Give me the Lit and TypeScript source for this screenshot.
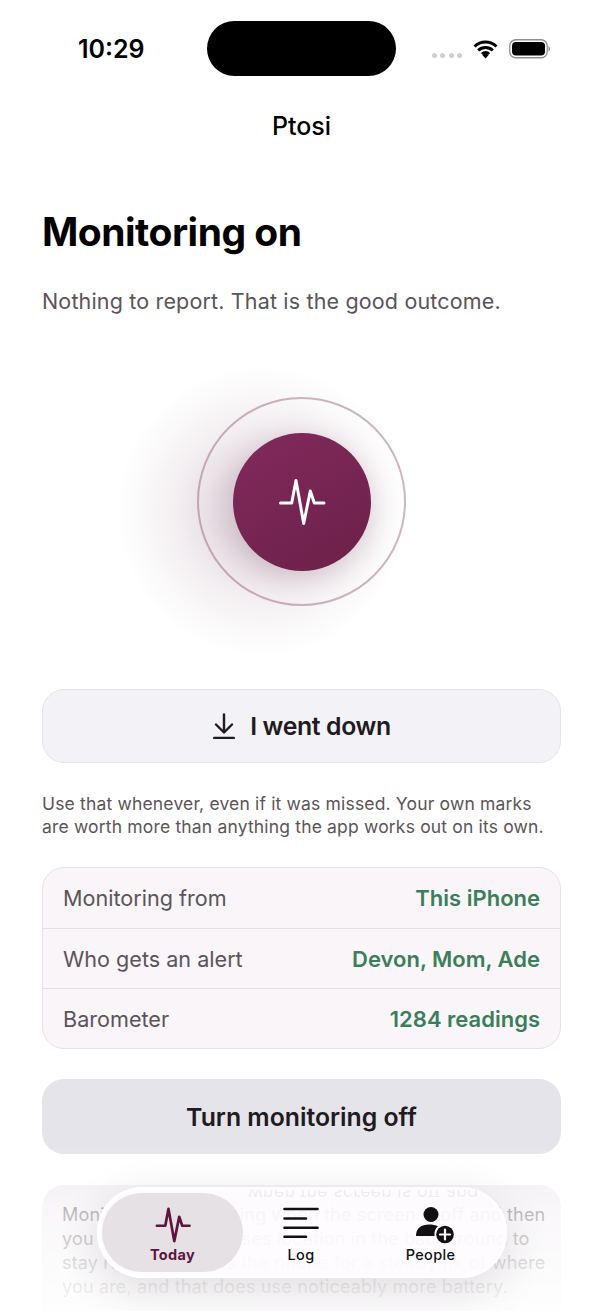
import { LitElement, html, css, svg } from 'lit';
import { customElement, property } from 'lit/decorators.js';

// same heartbeat trace on the hero disc and the Today tab
const pulse = (w: number) => svg`
  <path d="M2.5 25H13.7L18 2.500L25.700 45.500L32.300 13L36.300 25H46" fill="none" stroke="currentColor"
    stroke-width="${w}" stroke-linecap="round" stroke-linejoin="round"/>`;

@customElement('tab-item')
export class TabItem extends LitElement {
  @property() label = '';
  @property({ type: Boolean }) active = false;

  static styles = css`
    :host { display: block; }
    .tab {
      display: flex;
      flex-direction: column;
      align-items: center;
      justify-content: flex-end;
      height: 79px;
      padding-bottom: 8px;
      box-sizing: border-box;
      border-radius: 40px;
      color: #111014;
      font-size: 14.5px;
      font-weight: 500;
    }
    .tab.active {
      color: #5f1440;
      font-weight: 700;
      background: rgba(226, 222, 226, 0.9);
    }
    .icon { height: 36px; display: flex; align-items: center; margin-bottom: 3px; }
    span { line-height: 18px; letter-spacing: 0.3px; }
  `;

  render() {
    return html`
      <div class="tab ${this.active ? 'active' : ''}">
        <div class="icon"><slot></slot></div>
        <span>${this.label}</span>
      </div>
    `;
  }
}

@customElement('app-root')
export class AppRoot extends LitElement {
  static styles = css`
    :host {
      display: block;
      width: 603px;
      height: 1311px;
      position: relative;
      overflow: hidden;
      background: #fff;
      font-family: Inter, "Liberation Sans", sans-serif;
      color: #000;
    }

    .status {
      display: flex;
      align-items: flex-start;
      height: 101px;
      padding: 21px 0 0 78px;
      box-sizing: border-box;
    }
    .time {
      width: 129px;
      margin-top: 13px;
      font-size: 25px;
      line-height: 30px;
      font-weight: 600;
    }
    .island { width: 189px; height: 55px; border-radius: 28px; background: #000; }
    .sys { display: flex; align-items: flex-start; margin: 18px 0 0 36px; }
    .dots { display: flex; gap: 3.300px; margin: 14px 11px 0 0; }
    .dots i { width: 5px; height: 5px; border-radius: 50%; background: #cfcfcf; }
    .wifi { display: block; margin-right: 11px; }

    .title {
      height: 50px;
      text-align: center;
      font-size: 25px;
      line-height: 51px;
      font-weight: 500;
    }

    main { display: flex; flex-direction: column; padding: 0 42px; }

    h1 {
      margin: 56px 0 0;
      font-size: 39px;
      line-height: 50px;
      font-weight: 700;
      letter-spacing: -0.5px;
    }
    .sub {
      margin: 29px 0 0;
      font-size: 21.500px;
      line-height: 30px;
      letter-spacing: 0.16px;
      color: #5b5458;
    }

    .hero { display: flex; justify-content: center; margin: 81px 0 83px; }
    .ring {
      position: relative;
      width: 209px;
      height: 209px;
      box-sizing: border-box;
      border: 2px solid #d0b5c3;
      border-radius: 50%;
      display: flex;
      align-items: center;
      justify-content: center;
    }
    /* soft glow sits left of and below the disc, not centred on it */
    .glow {
      position: absolute;
      left: -82px;
      top: -33px;
      width: 290px;
      height: 290px;
      border-radius: 50%;
      background: radial-gradient(circle, rgba(100, 45, 80, 0.18) 20%, rgba(100, 45, 80, 0.08) 42%, rgba(100, 45, 80, 0.03) 58%, rgba(100, 45, 80, 0) 71%);
    }
    .disc {
      position: relative;
      width: 138px;
      height: 138px;
      border-radius: 50%;
      background: linear-gradient(150deg, #822a5c, #6b2049);
      box-shadow: 0 6px 28px rgba(80, 30, 60, 0.2);
      color: #fff;
      display: flex;
      align-items: center;
      justify-content: center;
    }

    .down {
      height: 74px;
      padding-left: 1px;
      box-sizing: border-box;
      border: 1.500px solid #e5e4ea;
      border-radius: 22px;
      background: #f2f2f7;
      display: flex;
      align-items: center;
      justify-content: center;
      gap: 15px;
      font-size: 24.800px;
      font-weight: 600;
      letter-spacing: -0.35px;
      color: #211a20;
    }

    .note {
      margin: 29px 0 0;
      font-size: 17.500px;
      line-height: 23px;
      letter-spacing: 0.17px;
      color: #5b5458;
    }

    .facts {
      margin-top: 29px;
      border: 1.500px solid #e6e2e7;
      border-radius: 22px;
      background: #f9f5f9;
    }
    .row {
      display: flex;
      justify-content: space-between;
      align-items: center;
      height: 60px;
      box-sizing: border-box;
      padding: 0 20px;
      font-size: 21.600px;
      color: #5b5458;
      border-top: 1px solid #e3dfe4;
    }
    .row:first-child { border-top: 0; }
    .row b { font-size: 22px; font-weight: 600; color: #3a7f5a; }

    .off {
      margin-top: 30px;
      height: 75px;
      border-radius: 22px;
      background: #e5e4ea;
      display: flex;
      align-items: center;
      justify-content: center;
      font-size: 24.800px;
      font-weight: 600;
      color: #211a20;
    }

    .more {
      margin-top: 31px;
      padding: 18px 0 0 20px;
      border-radius: 22px;
      background: #f1ecf1;
      font-size: 18px;
      line-height: 24px;
      letter-spacing: 0.17px;
      white-space: nowrap;
      color: #5b5458;
      height: 160px;
      box-sizing: border-box;
    }

    .fade {
      position: absolute;
      left: 0;
      right: 0;
      bottom: 0;
      height: 165px;
      background: linear-gradient(rgba(255,255,255,0), rgba(255,255,255,0.6) 40%, rgba(255,255,255,0.88) 85%, rgba(255,255,255,0.94));
    }

    nav {
      position: absolute;
      left: 97px;
      top: 1187px;
      width: 410px;
      height: 91px;
      box-sizing: border-box;
      padding: 6px 5px;
      border-radius: 46px;
      display: grid;
      grid-template-columns: 141px 116px 1fr;
      background: rgba(254, 252, 254, 0.9);
      box-shadow: inset 0 0 0 3px rgba(255,255,255,0.9), 0 12px 44px rgba(50, 35, 50, 0.14);
    }
    /* the glass throws back a flipped sliver of the text under it */
    .echo {
      position: absolute;
      left: 151px;
      top: 3px;
      height: 7px;
      overflow: hidden;
      font-size: 18px;
      letter-spacing: 0.17px;
      white-space: nowrap;
      color: rgba(91, 84, 88, 0.1);
    }
    .echo span { display: block; line-height: 18px; margin-top: -6px; transform: scaleY(-1); }
    .people { margin-left: 8px; }
  `;

  render() {
    return html`
      <div class="status">
        <div class="time">10:29</div>
        <div class="island"></div>
        <div class="sys">
          <div class="dots"><i></i><i></i><i></i><i></i></div>
          <svg class="wifi" width="25" height="20" viewBox="0 0 25 20">
            <path d="M1.500 7.500a16 16 0 0 1 22 0M5.200 11.500a10.600 10.600 0 0 1 14.600 0M8.900 15a5.400 5.400 0 0 1 7.200 0" fill="none" stroke="#000" stroke-width="3"/>
            <path d="M12.500 19.500l-3-3.200a4.300 4.300 0 0 1 6 0z" fill="#000"/>
          </svg>
          <svg width="41" height="20" viewBox="0 0 41 20">
            <rect x="0.750" y="0.750" width="37.500" height="18" rx="6" fill="none" stroke="#8f8f8f" stroke-width="1.300"/>
            <rect x="3" y="3" width="33" height="13.500" rx="4" fill="#000"/>
            <path d="M39.500 7v5.500c1-.4 1.500-1.500 1.500-2.750s-.5-2.350-1.500-2.750z" fill="#9a9a9a"/>
          </svg>
        </div>
      </div>
      <div class="title">Ptosi</div>
      <main>
        <h1>Monitoring on</h1>
        <p class="sub">Nothing to report. That is the good outcome.</p>
        <div class="hero">
          <div class="ring">
            <div class="glow"></div>
            <div class="disc">
              <svg width="48" height="48" viewBox="0 0 48 48">${pulse(3)}</svg>
            </div>
          </div>
        </div>
        <div class="down">
          <svg width="22" height="26" viewBox="0 0 22 26" fill="none" stroke="#211a20" stroke-width="2.400" stroke-linecap="round" stroke-linejoin="round">
            <path d="M11 1.500V19M3 11.500L11 19.500L19 11.500M1.200 25H20.800"/>
          </svg>
          I went down
        </div>
        <p class="note">Use that whenever, even if it was missed. Your own marks are worth more than anything the app works out on its own.</p>
        <div class="facts">
          <div class="row"><span>Monitoring from</span><b>This iPhone</b></div>
          <div class="row"><span>Who gets an alert</span><b>Devon, Mom, Ade</b></div>
          <div class="row"><span>Barometer</span><b>1284 readings</b></div>
        </div>
        <div class="off">Turn monitoring off</div>
        <div class="more">
          Monitoring keeps going when the screen is off and then<br>
          you walk off, and it uses location in the background to<br>
          stay running. It asks the phone for a steady fix of where<br>
          you are, and that does use noticeably more battery.
        </div>
      </main>
      <div class="fade"></div>
      <nav>
        <div class="echo"><span>when the screen is off and</span></div>
        <tab-item label="Today" active>
          <svg width="36" height="36" viewBox="0 0 48 48">${pulse(3.6)}</svg>
        </tab-item>
        <tab-item label="Log">
          <svg width="36" height="36" viewBox="0 0 36 36" fill="none" stroke="#111014" stroke-width="2.600" stroke-linecap="round">
            <path d="M1.500 2H34.500M1.500 11.500H23M1.500 20.700H34.500M1.500 29.700H23"/>
          </svg>
        </tab-item>
        <tab-item label="People">
          <svg class="people" width="38" height="38" viewBox="0 0 38 38">
            <circle cx="15" cy="8.500" r="7.500" fill="#111014"/>
            <path d="M0 30c0-8 5.500-11.500 13-11.500 3.500 0 6.500.5 9 1.800-2.600 2-4 5.500-3.500 9.700z" fill="#111014"/>
            <circle cx="29" cy="28.500" r="8.800" fill="#111014"/>
            <path d="M29 23.500v10M24 28.500h10" stroke="#fff" stroke-width="2.200" stroke-linecap="round"/>
          </svg>
        </tab-item>
      </nav>
    `;
  }
}
